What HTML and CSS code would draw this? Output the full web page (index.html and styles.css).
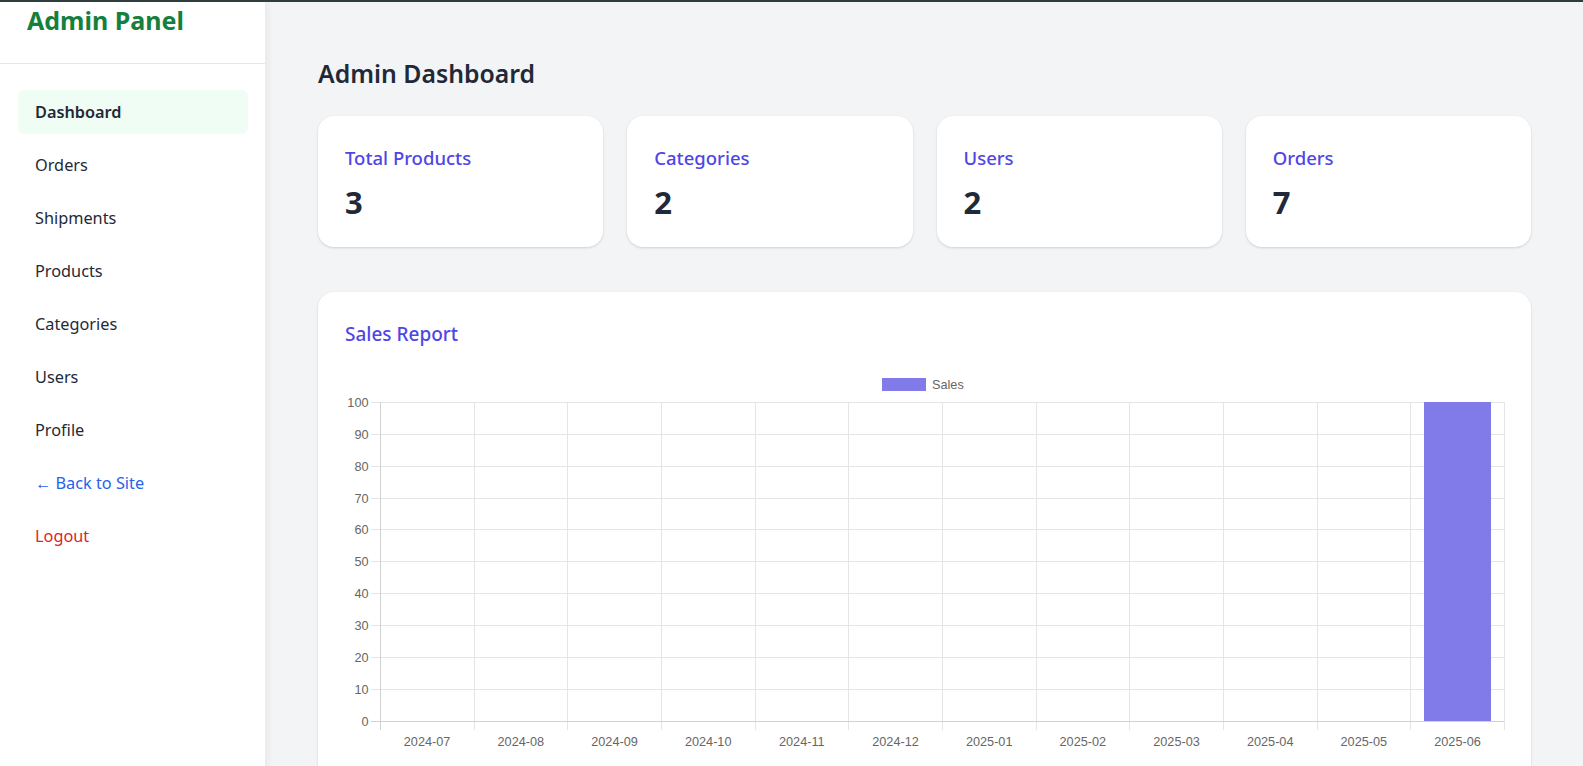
FILE: index.html
```html
<!DOCTYPE html>
<html lang="en">
<head>
<meta charset="utf-8">
<title>Admin Dashboard</title>
<link rel="stylesheet" href="styles.css">
</head>
<body>
<div class="layout">
  <aside class="sidebar">
    <div class="brand"><span class="brand-title">Admin Panel</span></div>
    <nav class="nav">
      <a class="nav-item active" href="#">Dashboard</a>
      <a class="nav-item" href="#">Orders</a>
      <a class="nav-item" href="#">Shipments</a>
      <a class="nav-item" href="#">Products</a>
      <a class="nav-item" href="#">Categories</a>
      <a class="nav-item" href="#">Users</a>
      <a class="nav-item" href="#">Profile</a>
      <a class="nav-item back" href="#">← Back to Site</a>
      <a class="nav-item logout" href="#">Logout</a>
    </nav>
  </aside>
  <main class="main">
    <h1 class="page-title">Admin Dashboard</h1>
    <section class="stats">
      <div class="card stat"><div class="stat-label">Total Products</div><div class="stat-value">3</div></div>
      <div class="card stat"><div class="stat-label">Categories</div><div class="stat-value">2</div></div>
      <div class="card stat"><div class="stat-label">Users</div><div class="stat-value">2</div></div>
      <div class="card stat"><div class="stat-label">Orders</div><div class="stat-value">7</div></div>
    </section>
    <section class="card report">
      <h2 class="report-title">Sales Report</h2>
      <svg class="chart" width="1159" height="400" viewBox="0 0 1159 400" xmlns="http://www.w3.org/2000/svg">
        <g class="legend">
          <rect x="537" y="13" width="44" height="13" fill="#817bea"/>
          <text x="587" y="24" class="tick">Sales</text>
        </g>
        <g stroke="#e5e5e5" stroke-width="1" shape-rendering="crispEdges">
          <line x1="26" y1="37.5" x2="1159" y2="37.5"/>
          <line x1="26" y1="69.5" x2="1159" y2="69.5"/>
          <line x1="26" y1="101.5" x2="1159" y2="101.5"/>
          <line x1="26" y1="133.5" x2="1159" y2="133.5"/>
          <line x1="26" y1="164.5" x2="1159" y2="164.5"/>
          <line x1="26" y1="196.5" x2="1159" y2="196.5"/>
          <line x1="26" y1="228.5" x2="1159" y2="228.5"/>
          <line x1="26" y1="260.5" x2="1159" y2="260.5"/>
          <line x1="26" y1="292.5" x2="1159" y2="292.5"/>
          <line x1="26" y1="324.5" x2="1159" y2="324.5"/>
          <line x1="129" y1="37" x2="129" y2="365"/>
          <line x1="222.6" y1="37" x2="222.6" y2="365"/>
          <line x1="316.3" y1="37" x2="316.3" y2="365"/>
          <line x1="410" y1="37" x2="410" y2="365"/>
          <line x1="503.7" y1="37" x2="503.7" y2="365"/>
          <line x1="597.3" y1="37" x2="597.3" y2="365"/>
          <line x1="691" y1="37" x2="691" y2="365"/>
          <line x1="784.7" y1="37" x2="784.7" y2="365"/>
          <line x1="878.3" y1="37" x2="878.3" y2="365"/>
          <line x1="972" y1="37" x2="972" y2="365"/>
          <line x1="1065.7" y1="37" x2="1065.7" y2="365"/>
          <line x1="1159" y1="37" x2="1159" y2="365"/>
        </g>
        <rect x="1079" y="37" width="67" height="319" fill="#817bea"/>
        <g stroke="#d2d2d2" stroke-width="1" shape-rendering="crispEdges">
          <line x1="26" y1="356.5" x2="1159" y2="356.5"/>
          <line x1="35.5" y1="37" x2="35.5" y2="365"/>
        </g>
        <g class="tick" text-anchor="end">
          <text x="23.5" y="41.5">100</text>
          <text x="23.5" y="73.5">90</text>
          <text x="23.5" y="105.5">80</text>
          <text x="23.5" y="137.5">70</text>
          <text x="23.5" y="168.5">60</text>
          <text x="23.5" y="200.5">50</text>
          <text x="23.5" y="232.5">40</text>
          <text x="23.5" y="264.5">30</text>
          <text x="23.5" y="296.5">20</text>
          <text x="23.5" y="328.5">10</text>
          <text x="23.5" y="360.5">0</text>
        </g>
        <g class="tick" text-anchor="middle">
          <text x="82.1" y="381">2024-07</text>
          <text x="175.8" y="381">2024-08</text>
          <text x="269.5" y="381">2024-09</text>
          <text x="363.2" y="381">2024-10</text>
          <text x="456.8" y="381">2024-11</text>
          <text x="550.5" y="381">2024-12</text>
          <text x="644.2" y="381">2025-01</text>
          <text x="737.8" y="381">2025-02</text>
          <text x="831.5" y="381">2025-03</text>
          <text x="925.2" y="381">2025-04</text>
          <text x="1018.8" y="381">2025-05</text>
          <text x="1112.5" y="381">2025-06</text>
        </g>
      </svg>
    </section>
  </main>
</div>
</body>
</html>
```
FILE: styles.css
```css
* { box-sizing: border-box; }
html, body { margin: 0; padding: 0; }
body {
  font-family: "Noto Sans", "Open Sans", sans-serif;
  color: #1f2937;
  background: #f3f4f6;
  border-top: 2px solid #2e3d3d;
}
.layout {
  display: flex;
  min-height: 764px;
}
.sidebar {
  width: 265px;
  flex-shrink: 0;
  background: #ffffff;
  box-shadow: 2px 0 8px rgba(0, 0, 0, 0.06);
  position: relative;
  z-index: 1;
}
.brand {
  height: 62px;
  border-bottom: 1px solid #e5e7eb;
  padding: 2px 0 0 27px;
}
.brand-title {
  font-size: 25px;
  line-height: 32px;
  font-weight: 700;
  color: #15803d;
}
.nav {
  display: flex;
  flex-direction: column;
  gap: 9px;
  padding: 26px 17px 0 18px;
}
.nav-item {
  display: block;
  height: 44px;
  line-height: 44px;
  padding: 0 17px;
  border-radius: 6px;
  font-size: 16.3px;
  color: #1f2937;
  text-decoration: none;
}
.nav-item.active {
  background: #f0fdf4;
  font-weight: 600;
}
.nav-item.back { color: #2563eb; }
.nav-item.logout { color: #dc2626; }
.main {
  flex: 1;
  padding: 55px 52px 0 53px;
}
.page-title {
  margin: 0 0 27px 0;
  font-size: 24.8px;
  line-height: 32px;
  font-weight: 600;
  color: #1f2937;
}
.stats {
  display: grid;
  grid-template-columns: repeat(4, 1fr);
  gap: 24px;
  margin-bottom: 45px;
}
.card {
  background: #ffffff;
  border-radius: 16px;
  box-shadow: 0 1px 3px rgba(0, 0, 0, 0.1), 0 1px 2px rgba(0, 0, 0, 0.05);
}
.stat {
  height: 131px;
  padding: 28px 27px;
}
.stat-label {
  font-size: 18.5px;
  line-height: 28px;
  font-weight: 500;
  color: #4f46e5;
}
.stat-value {
  margin-top: 10px;
  font-size: 31px;
  line-height: 40px;
  font-weight: 700;
  color: #1f2937;
}
.report {
  padding: 28px 27px 24px 27px;
}
.report-title {
  margin: 0 0 17px 0;
  font-size: 19px;
  line-height: 28px;
  font-weight: 500;
  color: #4f46e5;
}
.chart {
  display: block;
  overflow: visible;
}
.tick {
  font-family: "Liberation Sans", Arial, sans-serif;
  font-size: 12.7px;
  fill: #666666;
}
```
